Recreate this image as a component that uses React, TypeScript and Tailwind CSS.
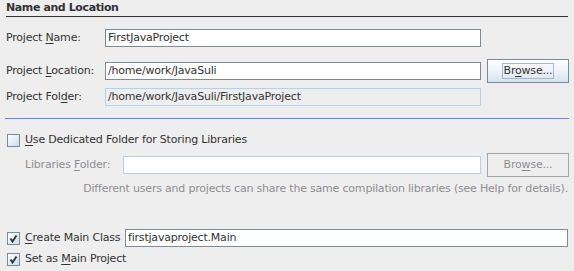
import React from "react";

const ink = "text-[#333333]";
const dim = "text-[#8e8f91]";

function U({ children }: { children: React.ReactNode }) {
  return <span className="underline underline-offset-[2px]">{children}</span>;
}

function Field({ value, width, kind = "edit" }: { value?: string; width: string; kind?: "edit" | "readonly" | "disabled" }) {
  const look =
    kind === "edit"
      ? "bg-white border-[#7a8a99]"
      : kind === "readonly"
      ? "bg-[#eeeeee] border-[#b8cfe5]"
      : "bg-white border-[#b8cfe5]";
  return (
    <div className={`${width} h-[18px] border ${look} flex items-center pl-[2px] ${ink} whitespace-nowrap overflow-hidden`}>
      {value}
    </div>
  );
}

function BrowseButton({ disabled }: { disabled?: boolean }) {
  if (disabled) {
    return (
      <div className={`ml-[6px] w-[82px] h-[24px] border border-[#a6a6a6] bg-[#eeeeee] flex items-center justify-center ${dim}`}>
        <span>
          Bro<U>w</U>se...
        </span>
      </div>
    );
  }
  return (
    <div className={`ml-[6px] w-[82px] h-[24px] border border-[#7a8a99] bg-gradient-to-b from-white via-[#eef3f8] to-[#d6e2ee] flex items-center justify-center ${ink}`}>
      <span className="border border-[#a3b8cc] px-[1px] leading-[14px]">
        Br<U>o</U>wse...
      </span>
    </div>
  );
}

function Check({ checked, children, disabled }: { checked?: boolean; children: React.ReactNode; disabled?: boolean }) {
  return (
    <div className="flex items-center h-[14px]">
      <div className="w-[13px] h-[13px] border border-[#7a8a99] bg-gradient-to-br from-white to-[#cfdbe7] flex items-center justify-center">
        {checked && (
          <svg width="9" height="9" viewBox="0 0 9 9">
            <path d="M1.5 4.5 L3.5 7.5 L7.5 1.5" stroke="#333" strokeWidth="1.9" fill="none" />
          </svg>
        )}
      </div>
      <span className={`ml-[5px] ${disabled ? dim : ink}`}>{children}</span>
    </div>
  );
}

export default function App() {
  return (
    <div
      className={`w-[574px] h-[271px] bg-[#eeeeee] text-[11px] tracking-[-0.2px] ${ink} overflow-hidden flex flex-col`}
      style={{ fontFamily: "'DejaVu Sans', sans-serif" }}
    >
      <div className="mx-[6px] h-[17px] border-b border-[#333333] flex items-center font-bold tracking-[-0.4px]">
        Name and Location
      </div>

      <div className="mt-[12px] h-[18px] pl-[6px] flex items-center">
        <div className="w-[99px]">
          Project <U>N</U>ame:
        </div>
        <Field width="w-[376px]" value="FirstJavaProject" />
      </div>

      <div className="mt-[12px] h-[24px] pl-[6px] flex items-center">
        <div className="w-[99px]">
          Project <U>L</U>ocation:
        </div>
        <Field width="w-[376px]" value="/home/work/JavaSuli" />
        <BrowseButton />
      </div>

      <div className="mt-[5px] h-[18px] pl-[6px] flex items-center">
        <div className="w-[99px]">
          Project Fol<U>d</U>er:
        </div>
        <Field width="w-[376px]" kind="readonly" value="/home/work/JavaSuli/FirstJavaProject" />
      </div>

      <div className="mt-[12px] mx-[5px] h-px bg-[#6a86bd]" />

      <div className="mt-[14px] pl-[7px]">
        <Check>
          <U>U</U>se Dedicated Folder for Storing Libraries
        </Check>
      </div>

      <div className="mt-[6px] h-[24px] pl-[25px] flex items-center">
        <div className={`w-[98px] ${dim}`}>
          Libraries <U>F</U>older:
        </div>
        <Field width="w-[358px]" kind="disabled" />
        <BrowseButton disabled />
      </div>

      <div className={`mt-[4px] h-[16px] pr-[6px] flex items-center justify-end ${dim}`}>
        Different users and projects can share the same compilation libraries (see Help for details).
      </div>

      <div className="mt-[32px] h-[18px] pl-[7px] pr-[6px] flex items-center">
        <Check checked>
          <U>C</U>reate Main Class
        </Check>
        <div className="ml-auto w-[443px] h-[18px] border border-[#7a8a99] bg-white flex items-center pl-[2px]">
          firstjavaproject.Main
        </div>
      </div>

      <div className="mt-[5px] pl-[7px]">
        <Check checked>
          Set as <U>M</U>ain Project
        </Check>
      </div>
    </div>
  );
}
